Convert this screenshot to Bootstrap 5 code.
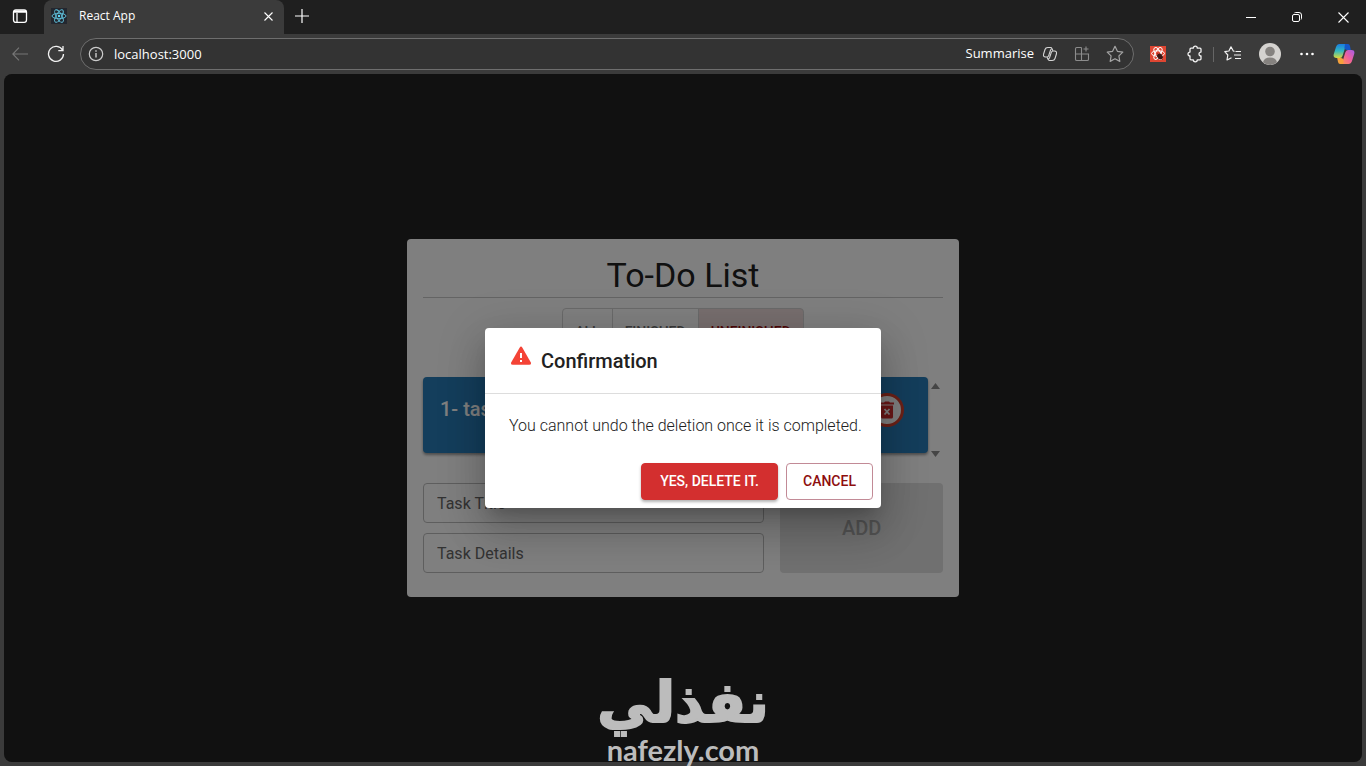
<!DOCTYPE html>
<html lang="en">
<head>
<meta charset="utf-8">
<meta name="viewport" content="width=device-width, initial-scale=1">
<title>React App</title>
<link href="https://cdn.jsdelivr.net/npm/bootstrap@5.3.0/dist/css/bootstrap.min.css" rel="stylesheet">
<style>
  html, body { height: 100%; }
  body { background: #3b3b3b; font-family: "Open Sans", "Noto Sans", sans-serif; color: #fff; overflow: hidden; }
  button { color: inherit; }
  svg { display: block; flex: none; }
  .icon-btn { background: none; border: 0; padding: 0; display: flex; align-items: center; justify-content: center; flex: none; }

  /* browser frame */
  .tab-strip { background: #1f1f1f; height: 34px; }
  .strip-menu { width: 40px; height: 32px; }
  .browser-tab { width: 240px; height: 34px; margin-left: 4px; padding: 0 7px 2px; background: #3b3b3b; border-radius: 8px 8px 0 0; font-size: 12px; line-height: 16px; }
  .new-tab { width: 36px; height: 34px; padding-bottom: 2px; }
  .win-btn { width: 46px; height: 34px; }
  .toolbar-row { height: 40px; padding: 0 4px; }
  .tool-back { width: 32px; }
  .tool-reload { width: 40px; }
  .address { height: 32px; margin-left: 4px; padding: 0 9px 0 7px; border: 1px solid #6e6e6e; border-radius: 16px; background: #333; font-size: 14px; min-width: 0; }
  .address input { background: none; border: 0; outline: 0; color: #fff; min-width: 0; padding: 0 0 0 10px; font-size: 13px; line-height: 20px; }
  .address .summarise { font-size: 13px; gap: 8px; color: #fff; margin-right: 16px; }
  .dim-icon { color: #8c8c8c; }
  .tools { padding-left: 5px; }
  .ext { width: 37px; height: 32px; }
  .rule { width: 1px; height: 15px; background: #666; }

  /* page */
  .viewport { margin: 0 4px 4px; background: #222; border-radius: 8px; min-height: 0; font-family: Roboto, sans-serif; }
  .todo { width: 100%; max-width: 552px; background: #fff; color: #212121; border-radius: 4px; padding: 16px 16px 24px; }
  .todo h1 { font-size: 34px; line-height: 40px; font-weight: 400; margin: 0; padding-bottom: 2px; text-align: center; }
  .todo hr { margin: 0 0 10px; border-color: #c8c8c8; opacity: 1; color: #c8c8c8; }
  .filters { height: 48px; margin-bottom: 21px; }
  .filters .btn { font-size: 14px; line-height: 24px; font-weight: 500; padding: 11px 12px; border: 1px solid #d4d4d4; border-radius: 4px; color: #757575; }
  .filters .btn.active { background: #efdcdc; color: #a01010; border-color: #d4d4d4; }
  .tasks { height: 86px; margin-bottom: 20px; }
  .task { height: 76px; background: #287db8; color: #fff; border-radius: 4px; padding: 16px 24px 16px 17px; box-shadow: 0 2px 3px rgba(0,0,0,.4); }
  .task h2 { font-size: 20px; line-height: 32px; font-weight: 500; margin: 0; }
  .delete { width: 34px; height: 34px; border: 3px solid #d9432f; border-radius: 50%; background: #fff; color: #d32f2f; }
  .scroll-ends { width: 15px; padding: 5px 0; color: #8a8a8a; }
  .fields { row-gap: 10px; }
  .field { height: 40px; border: 1px solid #bdbdbd; border-radius: 4px; padding: 0 13px; font-size: 16px; background: transparent; }
  .field::placeholder { color: #666; opacity: 1; }
  .add:disabled { background: #e0e0e0; color: #a6a6a6; border: 0; border-radius: 4px; font-size: 20px; font-weight: 500; opacity: 1; }

  /* dialog */
  .shade { background: rgba(0,0,0,.5); border-radius: 8px; z-index: 10; }
  .confirm { width: 396px; background: #fff; color: #212121; border-radius: 4px; box-shadow: 0 11px 15px -7px rgba(0,0,0,.2), 0 24px 38px 3px rgba(0,0,0,.14), 0 9px 46px 8px rgba(0,0,0,.12); }
  .confirm header { padding: 16px 24px; height: 65px; gap: 8px; }
  .confirm h2 { font-size: 20px; line-height: 34px; font-weight: 500; margin: 0; }
  .confirm p { margin: 0; padding: 20px 16px 20px 24px; border-top: 1px solid #ddd; font-size: 16px; line-height: 24px; font-weight: 300; }
  .confirm footer { padding: 5px 8px 8px; gap: 8px; }
  .confirm .btn { font-size: 14px; line-height: 25px; font-weight: 500; border-radius: 4px; padding: 5px 15px; }
  .yes { width: 137px; background: #d32f2f; color: #fff; border-color: #d32f2f; box-shadow: 0 2px 3px rgba(0,0,0,.3); }
  .no { width: 87px; color: #8e0e0e; border-color: #c28a96; }

  .watermark { bottom: 0; z-index: 20; color: #bcbcbc; pointer-events: none; text-align: center; }
  .mark-ar { font: 700 56px/62px "DejaVu Sans", sans-serif; -webkit-text-stroke: 2px #bcbcbc; }
  .mark-en { font: 700 29px/32px Lato, sans-serif; }
</style>
</head>
<body class="d-flex flex-column">
  <header>
    <div class="tab-strip d-flex">
      <button class="icon-btn strip-menu" aria-label="Tab actions">
        <svg width="16" height="16" viewBox="0 0 16 16" fill="none" stroke="#fff" stroke-width="1.3"><rect x="1.5" y="1.8" width="13" height="12.6" rx="2.3"/><path d="M2 3.500h12" stroke-width="2.500"/><path d="M5 5v9"/></svg>
      </button>
      <div class="browser-tab d-flex align-items-center">
        <svg width="16" height="16" viewBox="0 0 16 16" fill="none" stroke="#61c4df" stroke-width=".9"><path fill="#23272f" stroke="none" d="M0 0h16v16H0z"/><ellipse cx="8" cy="8" rx="7" ry="2.7"/><ellipse cx="8" cy="8" rx="7" ry="2.7" transform="rotate(60 8 8)"/><ellipse cx="8" cy="8" rx="7" ry="2.7" transform="rotate(120 8 8)"/><circle cx="8" cy="8" r="1.2" fill="#61dafb" stroke="none"/></svg>
        <span class="flex-grow-1 ps-2 ms-1">React App</span>
        <button class="icon-btn px-1" aria-label="Close tab"><svg width="9" height="9" viewBox="0 0 9 9" stroke="#fff" stroke-width="1.1"><path d="M.5.5l8 8M8.500.5l-8 8"/></svg></button>
      </div>
      <button class="icon-btn new-tab" aria-label="New tab"><svg width="14" height="14" viewBox="0 0 14 14" stroke="#fff" stroke-width="1.2"><path d="M7 0v14M0 7h14"/></svg></button>
      <div class="ms-auto d-flex">
        <button class="icon-btn win-btn" aria-label="Minimise"><svg width="10" height="10" viewBox="0 0 10 10" stroke="#fff"><path d="M0 5.500h10"/></svg></button>
        <button class="icon-btn win-btn" aria-label="Restore"><svg width="10" height="10" viewBox="0 0 10 10" fill="none" stroke="#fff"><rect x=".5" y="2.500" width="7" height="7" rx="1.500"/><path d="M2.500.8Q3 .5 3.500.5H7Q9.500.5 9.500 3v3.500q0 .6-.4 1"/></svg></button>
        <button class="icon-btn win-btn" aria-label="Close"><svg width="11" height="11" viewBox="0 0 11 11" stroke="#fff" stroke-width="1.1"><path d="M.5.5l10 10M10.500.5l-10 10"/></svg></button>
      </div>
    </div>
    <nav class="toolbar-row d-flex align-items-center">
      <button class="icon-btn tool-back" aria-label="Back"><svg width="16" height="14" viewBox="0 0 16 14" fill="none" stroke="#777" stroke-width="1.1"><path d="M16 7H1M7 .7L.8 7 7 13.300"/></svg></button>
      <button class="icon-btn tool-reload" aria-label="Reload"><svg width="18" height="18" viewBox="0 0 18 18" fill="none" stroke="#f2f2f2" stroke-width="1.300"><path d="M15.600 5.300A7.500 7.500 0 1 0 16.500 9M16 1v4.700h-4.700"/></svg></button>
      <div class="address d-flex align-items-center flex-grow-1">
        <svg width="16" height="16" viewBox="0 0 16 16" fill="none" stroke="#ccc" stroke-width="1.200"><circle cx="8" cy="8" r="6.700"/><path d="M8 7v4.500M8 4.300v1.500" stroke-width="1.400"/></svg>
        <input class="flex-grow-1" type="text" value="localhost:3000" aria-label="Address">
        <button class="icon-btn summarise">Summarise
          <svg width="16" height="16" viewBox="0 0 16 16" fill="none" stroke="#d5d5d5" stroke-width="1.100" stroke-linejoin="round"><path d="M10.800 4.500L10 2.600Q9.600 1.500 8.500 1.500H5.800Q3.600 1.500 3 3.500L1.600 8Q.9 11 3.500 11H5q1.300 0 1.700-1.300l1.700-5.200Q9 2.800 10 2.800M5.200 11.500l.8 1.900q.4 1.100 1.500 1.100h2.700q2.200 0 2.800-2L14.400 8Q15.100 5 12.500 5H11q-1.300 0-1.700 1.300l-1.700 5.200Q7 13.200 6 13.200"/></svg>
        </button>
        <button class="icon-btn dim-icon me-3" aria-label="Apps"><svg width="16" height="16" viewBox="0 0 16 16" fill="none" stroke="currentColor" stroke-width="1.100"><path d="M7.500 1.500H2.800Q1.500 1.500 1.500 2.800v10.400q0 1.300 1.300 1.300h10.400q1.300 0 1.300-1.300V8H1.500M7.500 1.500v13M12 .5v5M9.500 3h5"/></svg></button>
        <button class="icon-btn dim-icon" aria-label="Favourite"><svg width="18" height="18" viewBox="0 0 18 18" fill="none" stroke="#a5a5a5" stroke-width="1.200" stroke-linejoin="round"><path d="M9 1.300l2.400 5 5.400.8-3.900 3.800.9 5.500L9 13.800l-4.800 2.600.9-5.500L1.200 7.100l5.400-.8z"/></svg></button>
      </div>
      <div class="tools d-flex align-items-center">
        <button class="icon-btn ext" aria-label="React extension"><svg width="16" height="16" viewBox="0 0 16 16" fill="none" stroke="#fff"><path fill="#df4632" stroke="none" d="M0 0h16v16H0z"/><ellipse cx="8" cy="7.500" rx="6.500" ry="2.700"/><ellipse cx="8" cy="7.500" rx="6.500" ry="2.700" transform="rotate(60 8 7.500)"/><ellipse cx="8" cy="7.500" rx="6.500" ry="2.700" transform="rotate(120 8 7.500)"/><g fill="#3a1512" stroke="#3a1512"><ellipse cx="10" cy="10.500" rx="2" ry="2.600" transform="rotate(-40 10 10.500)"/><path d="M6.500 9.500l6 2M8.500 13l3-5M7.500 7.500l5 6" stroke-width=".8"/></g></svg></button>
        <button class="icon-btn ext" aria-label="Extensions"><svg width="18" height="18" viewBox="0 0 18 18" fill="none" stroke="#f2f2f2" stroke-width="1.300" stroke-linejoin="round"><path d="M5 3.200h2.300a2 2 0 0 1 4 0h2.700q1 0 1 1v2.900h-.5a2 2 0 0 0 0 3.900h.5v2.800q0 1-1 1h-2.700a2 2 0 0 1-4 0H5q-1 0-1-1V11H3.500a2 2 0 0 1 0-3.900H4V4.200q0-1 1-1z"/></svg></button>
        <span class="rule"></span>
        <button class="icon-btn ext" aria-label="Favourites"><svg width="18" height="16" viewBox="0 0 18 16" fill="none" stroke="#f2f2f2" stroke-width="1.200" stroke-linejoin="round"><path d="M10.500 5.300L9.300 5 7 .8 4.900 5 .8 5.700l3 3.300L3 14l4.500-2.200M11.500 5.500H17M10 9h7M11 12.500h6"/></svg></button>
        <button class="icon-btn ext" aria-label="Profile"><svg width="22" height="22" viewBox="0 0 22 22"><circle cx="11" cy="11" r="11" fill="#d4d2cf"/><circle cx="11" cy="8.500" r="4.800" fill="#85827f"/><path d="M4 19.300Q5 14.500 11 14.500t7 4.800Q15 22 11 22t-7-2.700z" fill="#85827f"/></svg></button>
        <button class="icon-btn ext" aria-label="Settings and more"><svg width="14" height="4" viewBox="0 0 14 4" fill="#fff"><circle cx="1.500" cy="2" r="1.300"/><circle cx="7" cy="2" r="1.300"/><circle cx="12.500" cy="2" r="1.300"/></svg></button>
        <button class="icon-btn ext" aria-label="Copilot">
          <svg width="22" height="22" viewBox="0 0 22 22"><defs><linearGradient id="cool" x1="0" y1="0" x2="0" y2="1"><stop offset="0" stop-color="#1a7de0"/><stop offset=".5" stop-color="#32b8c0"/><stop offset="1" stop-color="#d8d83c"/></linearGradient><linearGradient id="warm" x1="1" y1="0" x2="0" y2="1"><stop offset="0" stop-color="#a45ce8"/><stop offset=".5" stop-color="#f0609c"/><stop offset="1" stop-color="#ff9a4a"/></linearGradient></defs><path d="M14 1H6.500Q4 1 3 4L.8 11Q-.2 15 3.500 15H7q2 0 2.700-2.500L12 5q.8-2.500 2-4z" fill="url(#cool)"/><path d="M12 1h3q1.500 0 2 2l.8 4H14Q12 7 11.400 5z" fill="#1456c8"/><path d="M8 21h7.500q2.500 0 3.500-3l2.200-7q1-4-2.700-4H15q-2 0-2.700 2.500L10 17q-.8 2.500-2 4z" fill="url(#warm)"/><path d="M10 21H7q-1.500 0-2-2l-.8-4H8q2 0 2.600 2z" fill="#f5a13c"/></svg>
        </button>
      </div>
    </nav>
  </header>

  <main class="viewport position-relative flex-grow-1 d-flex align-items-center justify-content-center">
    <section class="todo">
      <h1>To-Do List</h1>
      <hr>
      <div class="filters d-flex justify-content-center">
        <div class="btn-group">
          <button class="btn">ALL</button>
          <button class="btn">FINISHED</button>
          <button class="btn active">UNFINISHED</button>
        </div>
      </div>
      <div class="tasks d-flex">
        <article class="task flex-grow-1 d-flex justify-content-between">
          <h2>1- task</h2>
          <button class="icon-btn delete" aria-label="Delete task"><svg width="20" height="20" viewBox="0 0 20 20" fill="currentColor"><path d="M3 2.500h4l1-1h4l1 1h4v2H3zM4 5.500h12V17q0 1.500-1.500 1.500h-9Q4 18.500 4 17z"/><path d="M7.500 9l5 5.500m0-5.500l-5 5.500" stroke="#fff" stroke-width="1.800"/></svg></button>
        </article>
        <div class="scroll-ends d-flex flex-column justify-content-between align-items-center">
          <svg width="9" height="8" viewBox="0 0 9 8" fill="currentColor"><path d="M4.500 1L9 7H0z"/></svg>
          <svg width="9" height="8" viewBox="0 0 9 8" fill="currentColor"><path d="M4.500 7L9 1H0z"/></svg>
        </div>
      </div>
      <form class="row g-3">
        <div class="col-8 d-grid fields">
          <input class="field w-100" type="text" placeholder="Task Title" aria-label="Task Title">
          <input class="field w-100" type="text" placeholder="Task Details" aria-label="Task Details">
        </div>
        <div class="col-4 d-grid"><button class="btn add" type="button" disabled>ADD</button></div>
      </form>
    </section>

    <div class="shade position-absolute top-0 start-0 w-100 h-100 d-flex align-items-center justify-content-center">
      <div class="confirm" role="dialog" aria-labelledby="confirm-title">
        <header class="d-flex">
          <svg width="24" height="24" viewBox="0 0 24 24"><path d="M10.600 3.700q1.400-2.300 2.800 0l8.300 14.600q1 2.500-1.400 2.500H3.700q-2.400 0-1.400-2.500z" fill="#f44336"/><path d="M12 9v5M12 16v2" stroke="#fff" stroke-width="2"/></svg>
          <h2 id="confirm-title">Confirmation</h2>
        </header>
        <p>You cannot undo the deletion once it is completed.</p>
        <footer class="d-flex justify-content-end">
          <button class="btn yes px-0">YES, DELETE IT.</button>
          <button class="btn no px-0">CANCEL</button>
        </footer>
      </div>
    </div>
  </main>

  <div class="watermark position-absolute start-0 w-100">
    <div class="mark-ar" lang="ar" dir="rtl">نفذلي</div>
    <div class="mark-en">nafezly.com</div>
  </div>
<script src="https://cdn.jsdelivr.net/npm/bootstrap@5.3.0/dist/js/bootstrap.bundle.min.js"></script>
</body>
</html>
